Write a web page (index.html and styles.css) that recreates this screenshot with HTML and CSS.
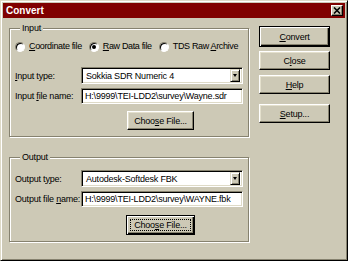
FILE: index.html
```html
<!DOCTYPE html>
<html lang="en">
<head>
  <meta charset="UTF-8" />
  <meta name="viewport" content="width=device-width, initial-scale=1.0" />
  <title>Convert</title>
  <link rel="stylesheet" href="styles.css">
</head>
<body>
  <div class="window">
    <div class="titlebar">
      <span class="title">Convert</span>
      <span class="close-x">
        <svg width="8" height="7" viewBox="0 0 8 7"><path d="M1 0.5 L7 6.5 M7 0.5 L1 6.5" stroke="#000" stroke-width="1.6"/></svg>
      </span>
    </div>

    <div class="content">
      <div class="groups">
        <div class="group group-input">
          <div class="legend">Input</div>
          <div class="radios">
            <span class="radio"><span class="dot"></span><span><u>C</u>oordinate file</span></span>
            <span class="radio checked"><span class="dot"></span><span><u>R</u>aw Data file</span></span>
            <span class="radio"><span class="dot"></span><span>TDS Raw <u>A</u>rchive</span></span>
          </div>
          <div class="row first">
            <span class="label"><u>I</u>nput type:</span>
            <div class="select"><span class="value">Sokkia SDR Numeric 4</span><span class="arrow"></span></div>
          </div>
          <div class="row">
            <span class="label">Input <u>f</u>ile name:</span>
            <div class="field">H:\9999\TEI-LDD2\survey\Wayne.sdr</div>
          </div>
          <div class="btn-row">
            <button class="btn choose">Choo<u>s</u>e File...</button>
          </div>
        </div>

        <div class="group group-output">
          <div class="legend">Output</div>
          <div class="row first">
            <span class="label">Output t<u>y</u>pe:</span>
            <div class="select"><span class="value">Autodesk-Softdesk FBK</span><span class="arrow"></span></div>
          </div>
          <div class="row">
            <span class="label">Output file <u>n</u>ame:</span>
            <div class="field">H:\9999\TEI-LDD2\survey\WAYNE.fbk</div>
          </div>
          <div class="btn-row">
            <button class="btn choose focused"><span class="focus"></span>Choo<u>s</u>e File...</button>
          </div>
        </div>
      </div>

      <div class="side">
        <button class="btn default"><u>C</u>onvert</button>
        <button class="btn">C<u>l</u>ose</button>
        <button class="btn help"><u>H</u>elp</button>
        <button class="btn setup"><u>S</u>etup...</button>
      </div>
    </div>
  </div>
</body>
</html>
```

FILE: styles.css
```css
body {
  margin: 0;
  background: #cdc9b6;
  font-family: "Liberation Sans", Arial, sans-serif;
  font-size: 9px;
  letter-spacing: -0.2px;
  color: #000;
}
u {
  text-decoration-thickness: 1px;
  text-underline-offset: 1px;
}
.window {
  width: 348px;
  height: 261px;
  box-sizing: border-box;
  border: 1px solid;
  border-color: #dedac7 #000 #000 #dedac7;
  box-shadow: inset 1px 1px #fff, inset -1px -1px #86826f;
  padding: 2px;
  background: #cdc9b6;
}
.titlebar {
  height: 15px;
  background: #800000;
  display: flex;
  align-items: center;
  justify-content: space-between;
  padding: 0 2px 0 3px;
}
.title {
  color: #fff;
  font-weight: bold;
  font-size: 10px;
  letter-spacing: 0;
}
.close-x {
  width: 12px;
  height: 11px;
  box-sizing: border-box;
  background: #cdc9b6;
  border: 1px solid;
  border-color: #fff #000 #000 #fff;
  box-shadow: inset -1px -1px #86826f;
  display: flex;
  align-items: center;
  justify-content: center;
}
.content {
  display: flex;
  padding: 5px 0 0 6px;
}
.groups {
  width: 240px;
  flex: none;
}
.group {
  box-sizing: border-box;
  border: 1px solid #86826f;
  box-shadow: inset 1px 1px #fff, 1px 1px #fff;
  padding: 0 5px 6px 5px;
  margin-top: 5px;
}
.group-output {
  margin-top: 20px;
}
.legend {
  display: table;
  margin: -6px 0 0 5px;
  padding: 0 2px;
  line-height: 11px;
  background: #cdc9b6;
}
.radios {
  display: flex;
  align-items: center;
  height: 11px;
  margin-top: 7px;
  gap: 7px;
  white-space: nowrap;
  letter-spacing: -0.35px;
}
.radio {
  display: flex;
  flex: none;
  align-items: center;
  gap: 4px;
  line-height: 11px;
}
.dot {
  width: 10px;
  height: 10px;
  flex: none;
  box-sizing: border-box;
  border-radius: 50%;
  background: #fff;
  border: 1px solid;
  border-color: #86826f #fff #fff #86826f;
  box-shadow: inset 1px 1px #000;
  display: flex;
  align-items: center;
  justify-content: center;
}
.radio.checked .dot::after {
  content: "";
  width: 4px;
  height: 4px;
  border-radius: 50%;
  background: #000;
}
.row {
  display: flex;
  align-items: center;
  margin-top: 4px;
}
.row.first {
  margin-top: 15px;
}
.group-output .row.first {
  margin-top: 7px;
}
.label {
  width: 66px;
  flex: none;
  white-space: nowrap;
}
.select,
.field {
  flex: 1;
  box-sizing: border-box;
  background: #fff;
  border: 1px solid;
  border-color: #86826f #fff #fff #86826f;
  box-shadow: inset 1px 1px #000, inset -1px -1px #dedac7;
  white-space: nowrap;
  overflow: hidden;
}
.select {
  height: 17px;
  display: flex;
  align-items: center;
  padding: 0 2px 0 4px;
}
.select .value {
  flex: 1;
}
.field {
  height: 16px;
  line-height: 14px;
  padding: 0 3px;
}
.arrow {
  width: 10px;
  height: 13px;
  box-sizing: border-box;
  background: #cdc9b6;
  border: 1px solid;
  border-color: #dedac7 #000 #000 #dedac7;
  box-shadow: inset 1px 1px #fff, inset -1px -1px #86826f;
  display: flex;
  align-items: center;
  justify-content: center;
}
.arrow::after {
  content: "";
  border-left: 2.5px solid transparent;
  border-right: 2.5px solid transparent;
  border-top: 3px solid #000;
}
.btn-row {
  padding-left: 112px;
  margin-top: 7px;
}
.group-output .btn-row {
  margin-top: 8px;
  padding-left: 111px;
}
.btn {
  display: block;
  box-sizing: border-box;
  height: 19px;
  padding: 0;
  font: inherit;
  letter-spacing: inherit;
  color: #000;
  background: #cdc9b6;
  border: 1px solid;
  border-color: #fff #000 #000 #fff;
  box-shadow: inset -1px -1px #86826f, inset 1px 1px #e4e0cd;
}
.choose {
  width: 67px;
}
.btn.focused {
  position: relative;
  width: 69px;
  height: 20px;
  border-color: #000;
  box-shadow: inset 1px 1px #fff, inset -1px -1px #000, inset -2px -2px #86826f;
}
.focus {
  position: absolute;
  inset: 3px;
  border: 1px dotted #000;
}
.side {
  display: flex;
  flex-direction: column;
  gap: 4px;
  margin: 3px 0 0 10px;
}
.side .btn {
  width: 71px;
}
.btn.default {
  height: 21px;
  border-color: #000;
  box-shadow: inset 1px 1px #fff, inset -1px -1px #000, inset -2px -2px #86826f;
}
.help {
  margin-top: 1px;
}
.setup {
  margin-top: 6px;
}
```
